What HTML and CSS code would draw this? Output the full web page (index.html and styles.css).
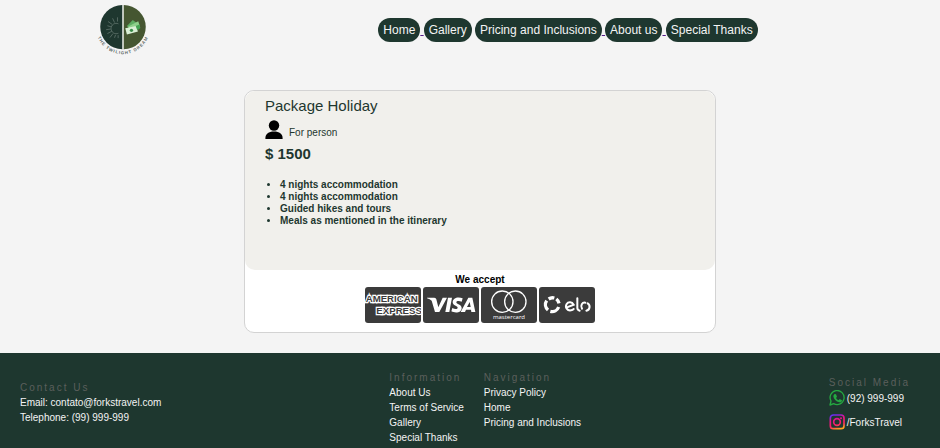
FILE: index.html
```html
<!DOCTYPE html>
<html lang="en">
<head>
<meta charset="utf-8">
<title>The Twilight Dream</title>
<link rel="stylesheet" href="styles.css">
</head>
<body>
<header class="header">
  <svg class="logo" viewBox="20 10 160 160" role="img" aria-label="The Twilight Dream">
    <path fill="#1e372f" d="M98 13a68 68 0 0 0 0 136z"/>
    <path fill="#455631" d="M102 13a68 68 0 0 1 0 136z"/>
    <path stroke="#d5dbd2" stroke-width="3" d="M100 13v136"/>
    <g fill="none" stroke="#71837c" stroke-width="2">
      <path d="M86 71a16 16 0 1 0 0 29"/>
      <path d="M83 64V51M74 67l-6-13M67 73l-13-9M63 80l-11-3M62 87l-14 2M65 94l-13 7M69 101l-9 12M77 105l-3 9M85 106v9"/>
    </g>
    <path fill="#5eac62" d="M112 78l18-19 16 12-16 26z"/>
    <path fill="#8fd08c" d="M116 79l31-16 6 19-30 17z"/>
    <path fill="#d9efd5" d="M107 85l33-7 6 17-34 9z"/>
    <circle cx="126" cy="91" r="5" fill="#398b48"/>
    <path fill="#45a353" d="M139 78l12-5 2 12-9 6z"/>
    <path id="arc" fill="none" d="M20 106A84 84 0 0 0 180 106"/>
    <text class="logo-text"><textPath href="#arc" startOffset="50%">THE TWILIGHT DREAM</textPath></text>
  </svg>
  <nav class="nav"><a href="#"><span class="pill">Home</span> </a><a href="#"><span class="pill">Gallery</span></a> <a href="#"><span class="pill">Pricing and Inclusions</span> </a><a href="#"><span class="pill">About us</span> </a><a href="#"><span class="pill">Special Thanks</span></a></nav>
</header>

<main class="main">
  <article class="card">
    <section class="package">
      <h1 class="title">Package Holiday</h1>
      <div class="person">
        <svg class="person-icon" viewBox="0 0 18 20" aria-hidden="true"><circle cx="9" cy="5.500" r="5.2"/><path d="M.4 19v-1C.4 14 3.600 11.500 9 11.500s8.600 2.500 8.600 6.500v1z"/></svg>
        <span>For person</span>
      </div>
      <p class="price">$ 1500</p>
      <ul class="features">
        <li>4 nights accommodation</li>
        <li>4 nights accommodation</li>
        <li>Guided hikes and tours</li>
        <li>Meals as mentioned in the itinerary</li>
      </ul>
    </section>
    <section class="payment">
      <h2 class="accept">We accept</h2>
      <div class="brands">
        <svg class="brand" viewBox="0 0 168 108" role="img" aria-label="American Express">
          <rect width="168" height="108" rx="9" fill="#3b3b3b"/>
          <g class="amex"><text x="2" y="46">AMERICAN</text><text x="34" y="81">EXPRESS</text></g>
        </svg>
        <svg class="brand" viewBox="0 0 168 108" role="img" aria-label="Visa">
          <rect width="168" height="108" rx="9" fill="#3b3b3b"/>
          <g fill="#fff">
            <path d="M12 32h22q5 0 6 5l6 24 13-29h13L49 75H36L26 41q-5-5-14-7z"/>
            <path d="M75 32h12l-8 43H67z"/>
            <path d="M119 34l-3 10c-7-3-16-3-16 2 0 6 16 6 16 17 0 15-20 16-31 10l3-10c8 5 16 4 16-1s-15-6-15-16c0-14 17-18 30-12z"/>
            <path fill-rule="evenodd" d="M136 32h12l9 43h-12l-1-7h-15l-3 7h-13zm4 13l-8 15h11z"/>
          </g>
        </svg>
        <svg class="brand" viewBox="0 0 168 108" role="img" aria-label="Mastercard">
          <rect width="168" height="108" rx="9" fill="#3b3b3b"/>
          <g fill="none" stroke="#fff" stroke-width="4"><circle cx="64" cy="44" r="32"/><circle cx="103" cy="44" r="32"/></g>
          <text class="mastercard" x="84" y="97">mastercard</text>
        </svg>
        <svg class="brand" viewBox="0 0 168 108" role="img" aria-label="Elo">
          <rect width="168" height="108" rx="9" fill="#3b3b3b"/>
          <g fill="none" stroke="#fff" stroke-width="10">
            <path d="M29 36a21 21 0 0 1 17-3M52 36a21 21 0 0 1 8 13M59 60a21 21 0 0 1-25 13M27 69a21 21 0 0 1-4-28"/>
          </g>
          <g fill="none" stroke="#fff" stroke-width="6" stroke-linecap="round">
            <path d="M82 62l22-9c-5-9-16-10-21-2-6 10 2 21 13 19q5-1 8-4M115 34v29q0 6 7 8M129 65c-6-9 1-20 10-18M146 49c9 6 7 20-4 22"/>
          </g>
        </svg>
      </div>
    </section>
  </article>
</main>

<footer class="footer">
  <section class="side contact">
    <h3 class="heading">Contact Us</h3>
    <p>Email: contato@forkstravel.com</p>
    <p>Telephone: (99) 999-999</p>
  </section>
  <div class="links">
    <section>
      <h3 class="heading">Information</h3>
      <ul>
        <li><a href="#">About Us</a></li>
        <li><a href="#">Terms of Service</a></li>
        <li><a href="#">Gallery</a></li>
        <li><a href="#">Special Thanks</a></li>
      </ul>
    </section>
    <section>
      <h3 class="heading">Navigation</h3>
      <ul>
        <li><a href="#">Privacy Policy</a></li>
        <li><a href="#">Home</a></li>
        <li><a href="#">Pricing and Inclusions</a></li>
      </ul>
    </section>
  </div>
  <section class="side social">
    <h3 class="heading">Social Media</h3>
    <a class="social-link" href="#">
      <svg viewBox="0 0 48 48" aria-hidden="true"><path fill="none" stroke="#25a941" stroke-width="4" stroke-linejoin="round" d="M3 45l3-12A21 21 0 1 1 14 41z"/><path fill="#25a941" d="M17 12l4 1 3 7-3 4q3 5 8 7l3-4 7 4c0 5-4 7-8 6C21 35 14 27 13 19q0-5 4-7z"/></svg>
      <span>(92) 999-999</span>
    </a>
    <a class="social-link" href="#">
      <svg viewBox="0 0 48 48" aria-hidden="true">
        <defs><linearGradient id="ig" gradientUnits="userSpaceOnUse" x1="16" y1="3" x2="30" y2="45"><stop offset="0" stop-color="#6a2cf0"/><stop offset="0.3" stop-color="#e4138c"/><stop offset="0.7" stop-color="#fa2463"/><stop offset="1" stop-color="#ffa51f"/></linearGradient></defs>
        <g fill="none" stroke="url(#ig)" stroke-width="5"><rect x="4" y="3" width="41" height="41" rx="9"/><circle cx="24" cy="24" r="10"/></g><circle cx="36" cy="13" r="3" fill="#e4138c"/>
      </svg>
      <span>/ForksTravel</span>
    </a>
  </section>
</footer>
</body>
</html>
```
FILE: styles.css
```css
* {
  box-sizing: border-box;
  margin: 0;
  padding: 0;
}

body {
  display: flex;
  flex-direction: column;
  min-height: 100vh;
  background: #f4f4f4;
  color: #1e372f;
  font-family: "Liberation Sans", Arial, sans-serif;
  font-size: 10px;
}

.header {
  display: flex;
  align-items: center;
  justify-content: space-between;
  padding: 4px 19.4% 6px 10.3%;
}

.logo {
  width: 52px;
  height: 52px;
}

.logo-text {
  fill: #59645f;
  font-size: 13px;
  font-weight: bold;
  letter-spacing: 3px;
  text-anchor: middle;
}

.nav {
  font-size: 12px;
  white-space: nowrap;
}

.nav a {
  color: #551a8b;
}

.pill {
  display: inline-block;
  padding: 0 5px;
  border-radius: 12px;
  background: #1e372f;
  color: #f4f4f4;
  line-height: 24px;
}

.main {
  display: flex;
  justify-content: center;
  padding: 28px 0 20px 20px;
}

.card {
  box-sizing: content-box;
  width: 50vw;
  border: 1px solid #d3d3d3;
  border-radius: 10px;
  background: #fff;
}

.package {
  padding: 6px 20px 43px;
  border-radius: 10px;
  background: #f1f0ec;
}

.title {
  font-size: 15px;
  font-weight: normal;
  line-height: 18px;
}

.person {
  display: flex;
  align-items: flex-end;
  gap: 6px;
  margin: 5px 0;
  line-height: 14px;
}

.person-icon {
  width: 18px;
  height: 20px;
}

.price {
  font-size: 15px;
  font-weight: bold;
  line-height: 18px;
}

.features {
  margin-top: 16px;
  padding-left: 15px;
  font-weight: bold;
  line-height: 12px;
}

.payment {
  padding: 4px 0 9px;
  text-align: center;
}

.accept {
  color: #000;
  font-size: 10px;
  line-height: 12px;
}

.brands {
  display: flex;
  justify-content: center;
  gap: 2px;
  margin-top: 1px;
}

.brand {
  width: 56px;
  height: 36px;
}

.amex {
  fill: #3b3b3b;
  stroke: #fff;
  stroke-width: 7px;
  paint-order: stroke;
  font-size: 29px;
  font-weight: bold;
}

.mastercard {
  fill: #fff;
  font-family: "Open Sans", sans-serif;
  font-size: 18px;
  text-anchor: middle;
}

.footer {
  display: flex;
  flex: 1;
  align-items: center;
  padding: 14px 30px 0 20px;
  background: #1e372f;
  color: #f4f4f4;
  line-height: 15px;
}

.footer ul {
  list-style: none;
}

.footer a {
  color: inherit;
  text-decoration: none;
}

.heading {
  color: #5b5f5c;
  font-size: 10px;
  font-weight: normal;
  letter-spacing: 2px;
}

.side {
  padding-bottom: 10px;
}

.contact {
  flex: 0 0 41.5%;
}

.links {
  display: flex;
  gap: 20px;
}

.social {
  display: flex;
  flex-direction: column;
  gap: 8px;
  margin-left: auto;
}

.social .heading {
  margin-bottom: -8px;
}

.social-link {
  display: flex;
  align-items: center;
  gap: 2px;
}

.social-link svg {
  width: 16px;
  height: 16px;
}
```
